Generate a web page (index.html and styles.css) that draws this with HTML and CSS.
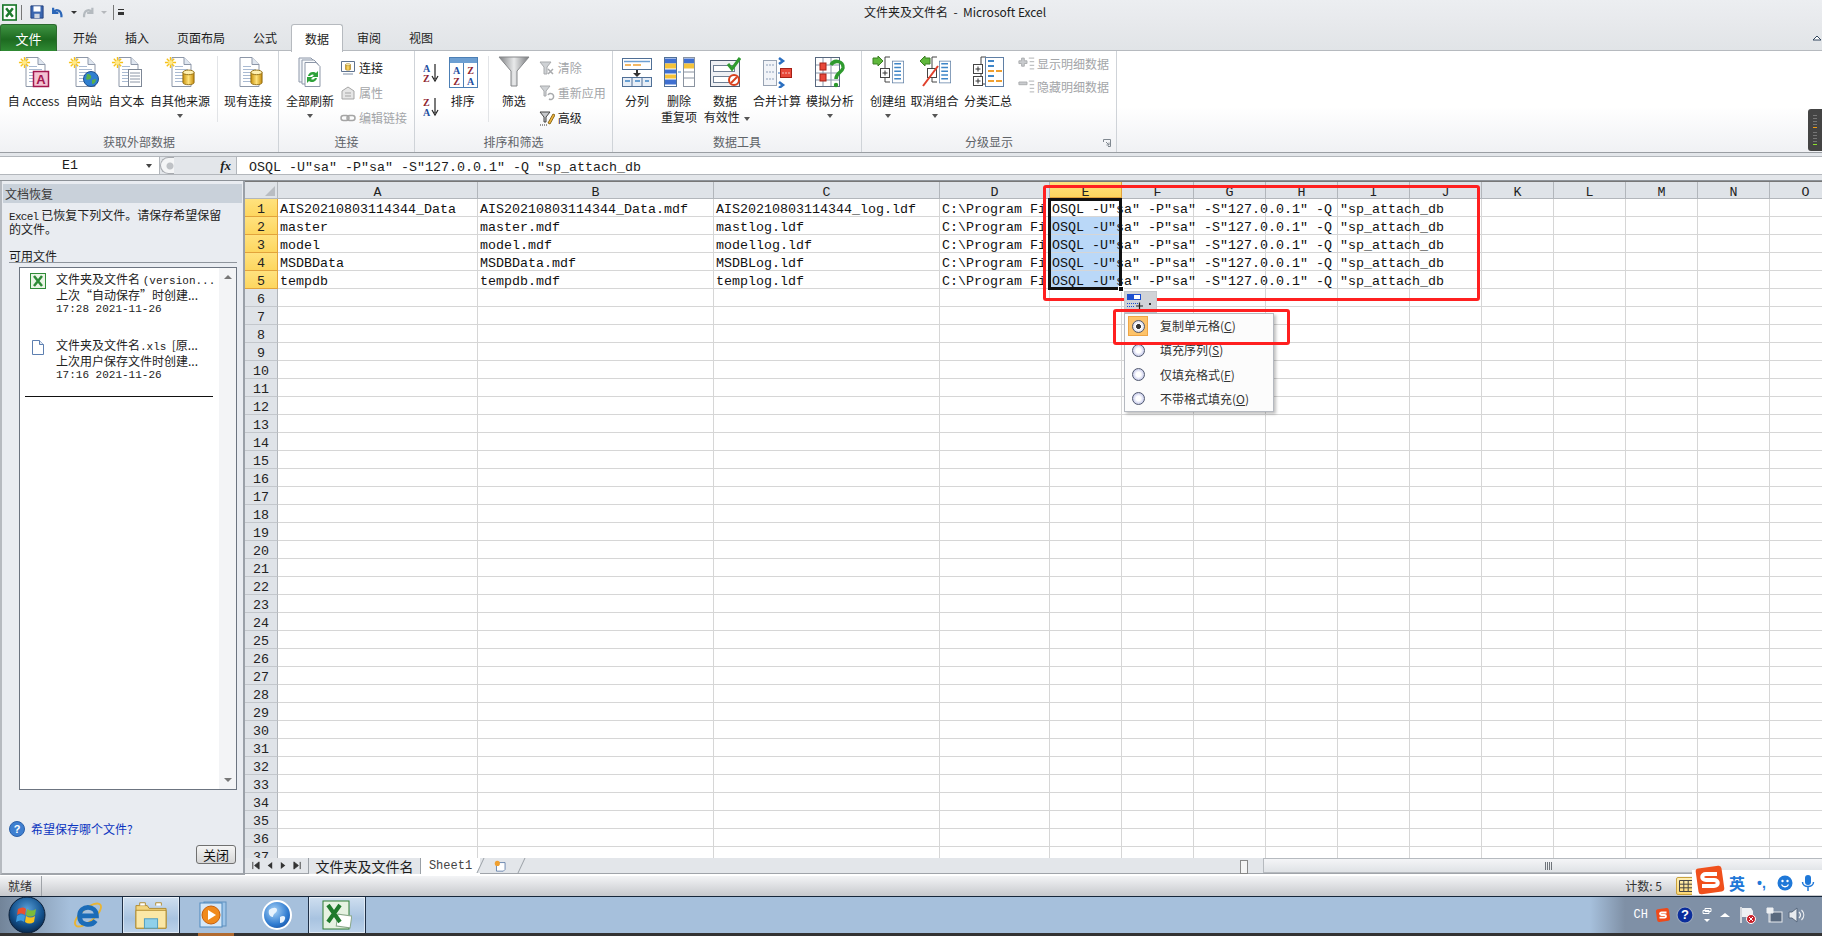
FILE: index.html
```html
<!DOCTYPE html>
<html lang="zh-CN">
<head>
<meta charset="utf-8">
<title>文件夹及文件名 - Microsoft Excel</title>
<link rel="stylesheet" href="styles.css">
</head>
<body>
<svg class="defs" width="0" height="0">
  <defs>
    <linearGradient id="gold" x1="0" x2="1" y1="0" y2="0"><stop offset="0" stop-color="#c9920e"/><stop offset=".5" stop-color="#ffe27a"/><stop offset="1" stop-color="#c48a0a"/></linearGradient>
    <linearGradient id="steel" x1="0" x2="1" y1="0" y2="0"><stop offset="0" stop-color="#7d7f82"/><stop offset=".5" stop-color="#e9eaeb"/><stop offset="1" stop-color="#77797c"/></linearGradient>
    <radialGradient id="orb" cx=".5" cy=".35" r=".7"><stop offset="0" stop-color="#5aa0d8"/><stop offset=".6" stop-color="#14538f"/><stop offset="1" stop-color="#071f3e"/></radialGradient>
    <radialGradient id="globe" cx=".4" cy=".35" r=".7"><stop offset="0" stop-color="#a9d3f7"/><stop offset=".7" stop-color="#2f7bd0"/><stop offset="1" stop-color="#1a56a8"/></radialGradient>
    <symbol id="doc" viewBox="0 0 32 32"><path d="M8 1.500h12l7 7v22H8z" fill="#fff" stroke="#8d97a8"/><path d="M20 1.500v7h7" fill="#dfe6f0" stroke="#8d97a8"/><path d="M11 10.500h8M11 13.500h13M11 16.500h13M11 19.500h13M11 22.500h13M11 25.500h13" stroke="#a9bad2"/></symbol>
    <symbol id="star" viewBox="0 0 14 14"><path d="M7 1v12M1 7h12M3 3l8 8M11 3l-8 8" stroke="#f6c21a" stroke-width="1.500"/><circle cx="7" cy="7" r="2.500" fill="#ffe98a"/></symbol>
    <symbol id="cyl" viewBox="0 0 14 18"><path d="M1 3.500v11c0 3 12 3 12 0v-11z" fill="url(#gold)" stroke="#8f6a10"/><ellipse cx="7" cy="3.500" rx="6" ry="2.500" fill="#fff0b0" stroke="#8f6a10"/></symbol>
    <symbol id="grouplist" viewBox="0 0 16 30"><rect x=".5" y=".5" width="15" height="29" fill="#fff" stroke="#5f7fa5"/><path d="M3 4h9M3 9h9M3 14h9M3 19h9M3 24h9" stroke="#3f86c8" stroke-width="2"/></symbol>
  </defs>
</svg>

<div class="app">
  <header class="titlebar">
    <div class="qat">
      <svg class="qat-x" viewBox="0 0 18 20"><rect x="1" y="1" width="16" height="18" fill="#fff" stroke="#1e7a2e" stroke-width="2"/><path d="M5 5l8 10M13 5l-8 10" stroke="#1e7a2e" stroke-width="3"/></svg>
      <span class="qat-sep"></span>
      <svg class="qat-i" viewBox="0 0 16 16"><path d="M1 1h14v14H1z" fill="#3a66b0" stroke="#1f3c78"/><rect x="4" y="1.500" width="8" height="6" fill="#fff"/><rect x="5" y="10" width="6" height="5" fill="#cfd6e2"/></svg>
      <svg class="qat-i undo" viewBox="0 0 16 16"><path d="M3 3v6h6M3.500 8.500C6 4 13 5 12.500 14" fill="none" stroke="#2b66b8" stroke-width="2.500"/></svg>
      <span class="qat-drop"></span>
      <svg class="qat-i redo" viewBox="0 0 16 16"><path d="M13 3v6H7M12.500 8.500C10 4 3 5 3.500 14" fill="none" stroke="#b4babf" stroke-width="2.500"/></svg>
      <span class="qat-drop dim"></span>
      <span class="qat-sep second"></span>
      <span class="qat-more"></span>
    </div>
    <div class="doc-title">文件夹及文件名 &nbsp;-&nbsp; Microsoft Excel</div>
  </header>

  <nav class="tabs">
    <div class="tab-file">文件</div>
    <div class="tab">开始</div>
    <div class="tab">插入</div>
    <div class="tab">页面布局</div>
    <div class="tab">公式</div>
    <div class="tab active">数据</div>
    <div class="tab">审阅</div>
    <div class="tab">视图</div>
    <svg class="collapse" viewBox="0 0 10 7"><path d="M1 6l4-4 4 4z" fill="#fff" stroke="#33475e"/></svg>
  </nav>

  <section class="ribbon">
    <div class="group g1">
      <div class="group-body">
        <div class="big w55"><svg class="ico" viewBox="0 0 32 32"><use href="#doc"/><use href="#star" x="0" y="0" width="13" height="13"/><rect x="15.500" y="15.500" width="15" height="15" fill="#f3c2d2" stroke="#a2164e" stroke-width="1.500"/><text x="23" y="28" class="ico-a">A</text></svg><span>自 Access</span></div>
        <div class="big w46"><svg class="ico" viewBox="0 0 32 32"><use href="#doc"/><use href="#star" x="0" y="0" width="13" height="13"/><circle cx="23" cy="23" r="7.500" fill="#2f7fd0" stroke="#1c4f8f"/><path d="M19 18c3 0 5 2 4 4s-4 2-5 1zM24 24l4-1c0 3-2 5-4 5z" fill="#57b04b"/></svg><span>自网站</span></div>
        <div class="big w39"><svg class="ico" viewBox="0 0 32 32"><use href="#doc"/><use href="#star" x="0" y="0" width="13" height="13"/><rect x="17.500" y="13.500" width="13" height="17" fill="#fff" stroke="#7d8796"/><path d="M19 17h10M19 20h10M19 23h10M19 26h10" stroke="#8c96a6"/></svg><span>自文本</span></div>
        <div class="big w68"><svg class="ico" viewBox="0 0 32 32"><use href="#doc"/><use href="#star" x="0" y="0" width="13" height="13"/><use href="#cyl" x="18" y="13" width="13" height="17"/></svg><span>自其他来源</span><i class="caret"></i></div>
        <span class="vsep sep1"></span>
        <div class="big w56"><svg class="ico" viewBox="0 0 32 32"><use href="#doc"/><use href="#cyl" x="18" y="13" width="13" height="17"/></svg><span>现有连接</span></div>
      </div>
      <div class="group-label">获取外部数据</div>
    </div>

    <div class="group g2">
      <div class="group-body">
        <div class="big w60"><svg class="ico" viewBox="0 0 32 32"><path d="M5 2h12l4 4v20H5z" fill="#f2f5f9" stroke="#8d97a8"/><path d="M8 4h12l4 4v20H8z" fill="#f8fafc" stroke="#8d97a8"/><path d="M11 6.500h11l4 4v20H11z" fill="#fff" stroke="#8d97a8"/><path d="M14 20a5 5 0 0 1 8-3l2-2v6h-6l2-2a3 3 0 0 0-4 1zM23 22a5 5 0 0 1-8 3l-2 2v-6h6l-2 2a3 3 0 0 0 4-1z" fill="#2ea23a"/></svg><span>全部刷新</span><i class="caret"></i></div>
        <div class="small-col w62">
          <div class="small"><svg class="sm" viewBox="0 0 16 16"><path d="M1.500 1.500h13v10h-13z" fill="#fff" stroke="#5f7390"/><use href="#cyl" x="5" y="3" width="6" height="8"/><path d="M3 14h10" stroke="#7f8ea5"/></svg>连接</div>
          <div class="small off"><svg class="sm" viewBox="0 0 16 16"><path d="M2 6l6-4 6 4v8H2z" fill="#e6e6e6" stroke="#a5a5a5"/><path d="M5 8h6M5 11h6" stroke="#a5a5a5"/></svg>属性</div>
          <div class="small off"><svg class="sm" viewBox="0 0 16 16"><rect x="1" y="5.500" width="8" height="5" rx="2.500" fill="none" stroke="#a5a5a5" stroke-width="1.500"/><rect x="7" y="5.500" width="8" height="5" rx="2.500" fill="none" stroke="#a5a5a5" stroke-width="1.500"/></svg>编辑链接</div>
        </div>
      </div>
      <div class="group-label">连接</div>
    </div>

    <div class="group g3">
      <div class="group-body">
        <div class="sort-col">
          <svg class="sort-ico" viewBox="0 0 16 20"><text x="0" y="9" class="az blue">A</text><text x="0" y="19" class="az red">Z</text><path d="M12 1v15M9 13l3 5 3-5" fill="none" stroke="#222" stroke-width="1.200"/></svg>
          <svg class="sort-ico" viewBox="0 0 16 20"><text x="0" y="9" class="az red">Z</text><text x="0" y="19" class="az blue">A</text><path d="M12 1v15M9 13l3 5 3-5" fill="none" stroke="#222" stroke-width="1.200"/></svg>
        </div>
        <div class="big w30"><svg class="ico" viewBox="0 0 32 32"><rect x="2.500" y="1.500" width="28" height="30" fill="#fff" stroke="#4c7fb5"/><rect x="3" y="2" width="27" height="5" fill="#6d9fd2"/><path d="M16.500 7v24" stroke="#4c7fb5"/><text x="9.500" y="18" class="az2 blue">A</text><text x="23.500" y="18" class="az2 red">Z</text><text x="9.500" y="29" class="az2 red">Z</text><text x="23.500" y="29" class="az2 blue">A</text></svg><span>排序</span></div>
        <span class="vsep sep2"></span>
        <div class="big w50"><svg class="ico" viewBox="0 0 32 32"><path d="M1 1h30L19 15v15h-6V15z" fill="url(#steel)" stroke="#85878a"/></svg><span>筛选</span></div>
        <div class="small-col w74">
          <div class="small off"><svg class="sm" viewBox="0 0 16 16"><path d="M1 2h11L8 7v7H5V7z" fill="#cfd2d5" stroke="#a8aaad"/><path d="M9 9l5 5M14 9l-5 5" stroke="#a8aaad" stroke-width="1.500"/></svg>清除</div>
          <div class="small off"><svg class="sm" viewBox="0 0 16 16"><path d="M1 1h10L7 6v5H5V6z" fill="#cfd2d5" stroke="#a8aaad"/><path d="M9 10a3 3 0 1 1 1 4" fill="none" stroke="#a8aaad" stroke-width="1.500"/></svg>重新应用</div>
          <div class="small"><svg class="sm" viewBox="0 0 16 16"><path d="M1 2h10L7 7v5H5V7z" fill="#c7c9cc" stroke="#444"/><path d="M9 13L14 4l2 1-5 9z" fill="#f3b53c" stroke="#8a6a1c"/><path d="M1 15h7" stroke="#333" stroke-dasharray="1 1"/></svg>高级</div>
        </div>
      </div>
      <div class="group-label">排序和筛选</div>
    </div>

    <div class="group g4">
      <div class="group-body">
        <div class="big w36"><svg class="ico" viewBox="0 0 32 32"><rect x="1.500" y="2.500" width="29" height="11" fill="#fff" stroke="#4f6f96"/><path d="M3 5.500h26" stroke="#6d9fd2" stroke-width="1.500"/><path d="M4 9h6M12 9h8" stroke="#f0a030" stroke-width="1.500"/><path d="M16 14v4" stroke="#333" stroke-width="2"/><path d="M12 17l4 4 4-4z" fill="#333"/><rect x="1.500" y="21.500" width="29" height="9" fill="#e7eef7" stroke="#4f6f96"/><path d="M11 22v8M21 22v8" stroke="#4f6f96"/><path d="M4 25h5M14 25h5M24 25h4" stroke="#3f86c8" stroke-width="1.500"/></svg><span>分列</span></div>
        <div class="big w48"><svg class="ico" viewBox="0 0 32 32"><rect x="1.500" y="1.500" width="12" height="29" fill="#fff" stroke="#4f6f96"/><path d="M2 5h11" stroke="#3f6fd0" stroke-width="5"/><path d="M2 10h11" stroke="#f5c33a" stroke-width="5"/><path d="M2 15.500h11" stroke="#3f6fd0" stroke-width="4"/><path d="M2 20.500h11" stroke="#f5c33a" stroke-width="4"/><path d="M2 26h11" stroke="#3f6fd0" stroke-width="5"/><path d="M15 16h3" stroke="#3f86c8"/><rect x="20.500" y="1.500" width="11" height="29" fill="#fff" stroke="#8a93a0"/><path d="M21 5h10" stroke="#3f6fd0" stroke-width="5"/><path d="M21 10h10" stroke="#f5c33a" stroke-width="5"/><path d="M21 16h10M21 22h10" stroke="#8a93a0"/></svg><span>删除</span><span>重复项</span></div>
        <div class="big w44"><svg class="ico" viewBox="0 0 32 32"><rect x="1.500" y="4.500" width="29" height="26" fill="#eef0f4" stroke="#4d5c70"/><rect x="4.500" y="9.500" width="21" height="6" fill="#fff" stroke="#6f7f94"/><rect x="4.500" y="20.500" width="21" height="6" fill="#fff" stroke="#6f7f94"/><path d="M19 8l4 5 8-11" fill="none" stroke="#2e9a2e" stroke-width="3"/><circle cx="25" cy="24" r="5" fill="#fff" stroke="#d8401c" stroke-width="2"/><path d="M22 27l6-6" stroke="#d8401c" stroke-width="2"/></svg><span>数据</span><span class="lift2">有效性 <i class="caret inline"></i></span></div>
        <div class="big w60"><svg class="ico" viewBox="0 0 32 32"><rect x="2.500" y="4.500" width="13" height="25" fill="#f2f4f8" stroke="#98a3b3"/><path d="M5 9h8M5 16h8M5 23h8" stroke="#8ea0bb" stroke-dasharray="2 1"/><rect x="19.500" y="12.500" width="11" height="9" fill="#e8483a" stroke="#a52016"/><path d="M21 17h8" stroke="#f7c2bc" stroke-dasharray="2 1"/><path d="M17 17h2" stroke="#2b66b8"/><path d="M18 2l4 3-4 3M18 26l4 3-4 3" fill="none" stroke="#2b6fc0" stroke-width="2.500"/></svg><span>合并计算</span></div>
        <div class="big w46"><svg class="ico" viewBox="0 0 32 32"><rect x="1.500" y="1.500" width="24" height="29" fill="#fff" stroke="#57677e"/><path d="M9 2v28M17 2v28M2 9h23M2 17h23M2 24h23" stroke="#8b98aa"/><rect x="6" y="7" width="6" height="7" fill="#e8483a" stroke="#a52016"/><rect x="6" y="18" width="6" height="7" fill="#e8483a" stroke="#a52016"/><path d="M17 9c3-6 13-4 12 3-1 5-7 4-7 11" fill="none" stroke="#2e9a2e" stroke-width="3.500"/><circle cx="22" cy="29" r="2.200" fill="#2e9a2e"/></svg><span>模拟分析</span><i class="caret"></i></div>
      </div>
      <div class="group-label">数据工具</div>
    </div>

    <div class="group g5">
      <div class="group-body">
        <div class="big w50"><svg class="ico" viewBox="0 0 32 32"><path d="M1 2h5V0l5 5-5 5V8H1z" fill="#5fb83c" stroke="#3b7f22"/><path d="M18 1h-5v25h5" fill="none" stroke="#444"/><rect x="8.500" y="12.500" width="9" height="9" fill="#fff" stroke="#444"/><path d="M10.500 17h5M13 14.500v5" stroke="#333"/><use href="#grouplist" x="20" y="1" width="12" height="30"/></svg><span>创建组</span><i class="caret"></i></div>
        <div class="big w43"><svg class="ico" viewBox="0 0 32 32"><path d="M11 2H6V0L1 5l5 5V8h5z" fill="#5fb83c" stroke="#3b7f22"/><path d="M18 1h-5v25h5" fill="none" stroke="#444"/><rect x="8.500" y="12.500" width="9" height="9" fill="#fff" stroke="#444"/><path d="M4 30L19 10" stroke="#e0402c" stroke-width="2"/><use href="#grouplist" x="20" y="1" width="12" height="30"/></svg><span>取消组合</span><i class="caret"></i></div>
        <div class="big w64"><svg class="ico" viewBox="0 0 32 32"><path d="M14 1H9v27h5" fill="none" stroke="#444"/><rect x="1.500" y="8.500" width="9" height="9" fill="#fff" stroke="#444"/><path d="M3.500 13h5M6 10.500v5" stroke="#333"/><rect x="1.500" y="20.500" width="9" height="9" fill="#fff" stroke="#444"/><path d="M3.500 25h5M6 22.500v5" stroke="#333"/><rect x="13.500" y="1.500" width="18" height="29" fill="#fff" stroke="#5f7fa5"/><path d="M16 5h6M16 10h6M16 20h6" stroke="#3f86c8" stroke-width="2"/><path d="M16 15h6M24 15h6M16 25h6M24 25h6" stroke="#f0a030" stroke-width="2"/></svg><span>分类汇总</span></div>
        <div class="small-col detail">
          <div class="small off tall"><svg class="sm2" viewBox="0 0 20 16"><path d="M4 2h3v3h3v3H7v3H4V8H1V5h3z" fill="#c9cbce" stroke="#a8aaad"/><path d="M12 2h6M13 6h5M13 10h5M13 14h5" stroke="#a8aaad"/></svg>显示明细数据</div>
          <div class="small off tall"><svg class="sm2" viewBox="0 0 20 16"><path d="M1 3h9v3H1z" fill="#c9cbce" stroke="#a8aaad"/><path d="M12 2h6M13 6h5M13 10h5M13 14h5" stroke="#a8aaad"/></svg>隐藏明细数据</div>
        </div>
      </div>
      <div class="group-label">分级显示<svg class="launcher" viewBox="0 0 8 8"><path d="M.5 3V.5H7.500V7.500H5M3 3l3 3M6 3.500V6H3.500" fill="none" stroke="#808890"/></svg></div>
    </div>
    <div class="meter"><i></i><i></i><i></i><i></i><i class="orange"></i><i class="gap"></i><i></i><i></i><i></i><i></i><i class="green"></i></div>
  </section>

  <div class="formula">
    <div class="namebox"><span>E1</span><i class="name-arrow"></i></div>
    <div class="fx-zone"><span class="knob"></span><em class="fx">fx</em></div>
    <div class="formula-text">OSQL -U"sa" -P"sa" -S"127.0.0.1" -Q "sp_attach_db</div>
  </div>

  <main class="main">
    <aside class="panel">
      <div class="panel-title">文档恢复</div>
      <p class="panel-desc"><span class="mono-word">Excel</span> 已恢复下列文件。请保存希望保留<br>的文件。</p>
      <div class="panel-sub">可用文件</div>
      <div class="file-list">
        <div class="files">
          <div class="file">
            <svg class="file-ico" viewBox="0 0 16 16"><rect x=".5" y=".5" width="15" height="15" fill="#eaf5e6" stroke="#2e8b37"/><path d="M4 3l8 10M12 3L4 13" stroke="#2e8b37" stroke-width="2.500"/></svg>
            <div class="file-text"><div>文件夹及文件名 <span class="mono-inline">(version...</span></div><div>上次“自动保存”时创建...</div><div class="mono-small">17:28 2021-11-26</div></div>
          </div>
          <div class="file second">
            <svg class="file-ico" viewBox="0 0 16 16"><path d="M2.500 1.500h7l4 4v10h-11z" fill="#fff" stroke="#5d7fb0"/><path d="M9.500 1.500v4h4" fill="#dfe8f4" stroke="#5d7fb0"/></svg>
            <div class="file-text"><div>文件夹及文件名<span class="mono-inline">.xls</span>&nbsp; [原...</div><div>上次用户保存文件时创建...</div><div class="mono-small">17:16 2021-11-26</div></div>
          </div>
          <hr class="file-rule">
        </div>
        <div class="list-scroll"><i class="up"></i><i class="down"></i></div>
      </div>
      <div class="help">
        <svg class="help-ico" viewBox="0 0 16 16"><circle cx="8" cy="8" r="7.500" fill="#3e7fd0" stroke="#2a5fa8"/><text x="8" y="12" class="help-q">?</text></svg>
        <span>希望保存哪个文件?</span>
      </div>
      <div class="panel-foot"><button class="close-btn" type="button">关闭</button></div>
    </aside>

    <section class="sheet">
      <div class="grid-wrap">
        <div class="corner"><i></i></div>
        <div class="colheads">
          <div class="ch c-a">A</div><div class="ch c-b">B</div><div class="ch c-c">C</div><div class="ch c-d">D</div>
          <div class="ch c-n sel">E</div><div class="ch c-n">F</div><div class="ch c-n">G</div><div class="ch c-n">H</div><div class="ch c-n">I</div><div class="ch c-n">J</div><div class="ch c-n">K</div><div class="ch c-n">L</div><div class="ch c-n">M</div><div class="ch c-n">N</div><div class="ch c-n">O</div>
        </div>
        <div class="rowheads">
          <div class="rh sel">1</div><div class="rh sel">2</div><div class="rh sel">3</div><div class="rh sel">4</div><div class="rh sel">5</div>
          <div class="rh">6</div><div class="rh">7</div><div class="rh">8</div><div class="rh">9</div><div class="rh">10</div><div class="rh">11</div><div class="rh">12</div><div class="rh">13</div><div class="rh">14</div><div class="rh">15</div><div class="rh">16</div><div class="rh">17</div><div class="rh">18</div><div class="rh">19</div><div class="rh">20</div><div class="rh">21</div><div class="rh">22</div><div class="rh">23</div><div class="rh">24</div><div class="rh">25</div><div class="rh">26</div><div class="rh">27</div><div class="rh">28</div><div class="rh">29</div><div class="rh">30</div><div class="rh">31</div><div class="rh">32</div><div class="rh">33</div><div class="rh">34</div><div class="rh">35</div><div class="rh">36</div><div class="rh">37</div>
        </div>
        <div class="cells">
          <div class="row"><div class="cell">AIS20210803114344_Data</div><div class="cell">AIS20210803114344_Data.mdf</div><div class="cell">AIS20210803114344_log.ldf</div><div class="cell">C:\Program Fi</div><div class="cell">OSQL -U"sa" -P"sa" -S"127.0.0.1" -Q "sp_attach_db</div></div>
          <div class="row"><div class="cell">master</div><div class="cell">master.mdf</div><div class="cell">mastlog.ldf</div><div class="cell">C:\Program Fi</div><div class="cell fill">OSQL -U"sa" -P"sa" -S"127.0.0.1" -Q "sp_attach_db</div></div>
          <div class="row"><div class="cell">model</div><div class="cell">model.mdf</div><div class="cell">modellog.ldf</div><div class="cell">C:\Program Fi</div><div class="cell fill">OSQL -U"sa" -P"sa" -S"127.0.0.1" -Q "sp_attach_db</div></div>
          <div class="row"><div class="cell">MSDBData</div><div class="cell">MSDBData.mdf</div><div class="cell">MSDBLog.ldf</div><div class="cell">C:\Program Fi</div><div class="cell fill">OSQL -U"sa" -P"sa" -S"127.0.0.1" -Q "sp_attach_db</div></div>
          <div class="row"><div class="cell">tempdb</div><div class="cell">tempdb.mdf</div><div class="cell">templog.ldf</div><div class="cell">C:\Program Fi</div><div class="cell fill">OSQL -U"sa" -P"sa" -S"127.0.0.1" -Q "sp_attach_db</div></div>
          <div class="selection"><i></i></div>
        </div>
      </div>
      <div class="sheet-foot">
        <div class="nav-btns">
          <svg viewBox="0 0 10 10"><path d="M2 1v8M9 1v8L4 5z" fill="#333" stroke="#333"/></svg>
          <svg viewBox="0 0 10 10"><path d="M8 1v8L3 5z" fill="#333"/></svg>
          <svg viewBox="0 0 10 10"><path d="M2 1v8l5-4z" fill="#333"/></svg>
          <svg viewBox="0 0 10 10"><path d="M8 1v8M1 1v8l5-4z" fill="#333" stroke="#333"/></svg>
        </div>
        <div class="sheet-tab">文件夹及文件名</div>
        <div class="sheet-tab current">Sheet1</div>
        <div class="sheet-new"><svg viewBox="0 0 16 14"><path d="M3 3h10v8l-2 2H3z" fill="#fff" stroke="#5c7ba6"/><circle cx="4" cy="4" r="3" fill="#f0a030"/></svg></div>
        <div class="hsplit"></div>
        <div class="hscroll"><span class="grip"></span></div>
      </div>
    </section>
  </main>

  <footer class="status">
    <div class="ready">就绪</div>
    <div class="count">计数: 5</div>
    <div class="view-btn"><svg viewBox="0 0 14 12"><path d="M.5.5h13v11H.5zM.5 4.200h13M.5 7.800h13M4.800.5v11M9.200.5v11" fill="none" stroke="#444"/></svg></div>
  </footer>

  <div class="taskbar">
    <div class="tb orb-slot"><svg class="orb" viewBox="0 0 38 38"><circle cx="19" cy="19" r="18" fill="url(#orb)" stroke="#0d2038"/><path d="M10 13c3-2 6-2 8 0l-1 6c-3-2-5-2-8 0z" fill="#e8512f"/><path d="M19 13c3 2 6 2 9 0l-1 6c-3 2-6 2-9 0z" fill="#7cbb3a"/><path d="M9 20c3-2 5-2 8 0l-1 6c-2-2-5-2-8 0z" fill="#3e9be0"/><path d="M18 20c3 2 6 2 9 0l-1 6c-3 2-6 2-9 0z" fill="#f6c21c"/></svg></div>
    <div class="tb ie-slot"><svg class="ie" viewBox="0 0 34 34"><ellipse cx="17" cy="17" rx="17" ry="7" transform="rotate(-40 17 17)" fill="none" stroke="#e9b434" stroke-width="2"/><path d="M8 18h18c0-12-18-12-18 0 0 11 13 11 17 5" fill="none" stroke="#1b6cb8" stroke-width="5"/></svg></div>
    <div class="tb active-tb w58"><svg class="folder" viewBox="0 0 34 30"><path d="M1 5h12l2 3h18v21H1z" fill="#f3d57e" stroke="#b08a2c"/><path d="M1 10h32v19H1z" fill="#fbe7a6" stroke="#b08a2c"/><rect x="10" y="19" width="14" height="10" fill="#8fd0ea" stroke="#4d9bc0"/><path d="M5 5V2h6v3M22 5V2h6v3" fill="#fff" stroke="#b08a2c"/></svg></div>
    <div class="tb w65"><svg class="media" viewBox="0 0 30 30"><rect x="6" y="2" width="22" height="24" fill="#9fc5e8" stroke="#5f8fbd"/><rect x="2" y="3" width="22" height="24" fill="#d5e7f7" stroke="#4d88bd"/><circle cx="13" cy="15" r="9" fill="#f08a1c" stroke="#c75f0c"/><path d="M10 10l8 5-8 5z" fill="#fff"/></svg></div>
    <div class="tb w63"><svg class="globe-i" viewBox="0 0 30 30"><circle cx="15" cy="15" r="14" fill="url(#globe)" stroke="#fff" stroke-width="2"/><path d="M7 10c4-3 8-3 8 0s-4 3-4 7c-3 0-5-3-4-7zM18 17c3-2 6-1 5 2s-3 4-5 4z" fill="#e8f3fd"/></svg></div>
    <div class="tb active-tb w58"><svg class="xl" viewBox="0 0 30 30"><rect x="1" y="1" width="26" height="28" fill="#e6f2e2" stroke="#2e7d32"/><rect x="15" y="15" width="14" height="12" fill="#fff" stroke="#8aa88a" transform="rotate(8 22 21)"/><path d="M6 5l12 17M18 5L6 22" stroke="#1f7a2c" stroke-width="4"/></svg></div>
    <div class="tray">
      <span class="ch-label">CH</span>
      <svg class="tray-s" viewBox="0 0 16 16"><rect x="1.500" y="1.500" width="13" height="13" rx="2" fill="#ef4a1a" transform="rotate(-8 8 8)"/><path d="M11.500 5.500H6.500c-2 0-2 2.500 0 2.500h3c2 0 2 2.700 0 2.700H4.500" fill="none" stroke="#fff" stroke-width="1.800"/></svg>
      <svg class="tray-q" viewBox="0 0 18 18"><circle cx="9" cy="9" r="8" fill="#0b2d9c" stroke="#9aa7b8" stroke-width="1.200"/><text x="9" y="13" class="tray-qt">?</text></svg>
      <svg class="tray-w" viewBox="0 0 10 18"><path d="M3 2.500h6v3H3zM1 4.500h6v3H1z" fill="none" stroke="#fff"/><path d="M2 13h6l-3 3z" fill="#fff"/></svg>
      <svg class="tray-u" viewBox="0 0 10 6"><path d="M0 5l5-4 5 4z" fill="#fff"/></svg>
      <svg class="tray-f flag" viewBox="0 0 18 18"><path d="M2 1v16" stroke="#eee" stroke-width="1.500"/><path d="M3 2h9l2 3v6H3z" fill="#eef0f3"/><circle cx="12" cy="13" r="4.500" fill="#c8202a" stroke="#fff"/><path d="M10 11l4 4M14 11l-4 4" stroke="#fff"/></svg>
      <svg class="tray-f" viewBox="0 0 18 18"><rect x="4" y="6" width="13" height="10" fill="#59697e" stroke="#e7eaee"/><path d="M2 2h6v5H2zM5 7v9" fill="#eef0f3" stroke="#eef0f3"/></svg>
      <svg class="tray-f" viewBox="0 0 18 18"><path d="M1 6h3l5-4v14l-5-4H1z" fill="#e8ebef" stroke="#59697e"/><path d="M11 6c2 2 2 4 0 6M13.500 4c3 3 3 7 0 10" fill="none" stroke="#eef0f3" stroke-width="1.200"/></svg>
    </div>
  </div>
  <div class="strip"><i></i></div>

  <div class="red-box box-a"></div>
  <div class="autofill">
    <svg viewBox="0 0 20 18"><rect x=".5" y=".5" width="13" height="5" fill="#fff" stroke="#1c4fd0"/><rect x="1" y="1" width="6" height="4" fill="#1c4fd0"/><path d="M0 9.500h13M0 12.500h7" stroke="#1c4fd0" stroke-dasharray="1 1"/><path d="M9 12h7M12.500 8.500v7" stroke="#222" stroke-width="1.200"/></svg>
    <i class="dot"></i>
  </div>
  <div class="fill-menu">
    <div class="mi current"><span class="radio-box"><i class="radio on"></i></span><span>复制单元格(<u>C</u>)</span></div>
    <div class="mi"><span class="radio-box"><i class="radio"></i></span><span>填充序列(<u>S</u>)</span></div>
    <div class="mi"><span class="radio-box"><i class="radio"></i></span><span>仅填充格式(<u>F</u>)</span></div>
    <div class="mi"><span class="radio-box"><i class="radio"></i></span><span>不带格式填充(<u>O</u>)</span></div>
  </div>
  <div class="red-box box-b"></div>

  <div class="ime">
    <svg class="ime-s" viewBox="0 0 30 30"><rect x="2" y="2" width="26" height="26" rx="3" fill="#f0501c" transform="rotate(-8 15 15)"/><path d="M22 9H11C6 9 6 15 11 15h8c5 0 5 6 0 6H7" fill="none" stroke="#fff" stroke-width="4"/></svg>
    <span class="ime-en">英</span>
    <span class="ime-p">•,</span>
    <svg class="ime-i" viewBox="0 0 16 16"><circle cx="8" cy="8" r="7.500" fill="#1f78d8"/><circle cx="5.500" cy="6" r="1.200" fill="#fff"/><circle cx="10.500" cy="6" r="1.200" fill="#fff"/><path d="M4.500 9.500c1.500 3 5.500 3 7 0" fill="none" stroke="#fff" stroke-width="1.300"/></svg>
    <svg class="ime-i" viewBox="0 0 16 16"><rect x="5" y="0" width="6" height="10" rx="3" fill="#1f78d8"/><path d="M2.500 7c0 6 11 6 11 0M8 12v4" fill="none" stroke="#1f78d8" stroke-width="1.500"/></svg>
  </div>
</div>
</body>
</html>
```
FILE: styles.css
```css
* { box-sizing: border-box; }
html, body { margin: 0; height: 100%; overflow: hidden; background: #fff; }
body { font: 12px/16px "Noto Sans CJK SC", "Liberation Sans", sans-serif; color: #1c1c1c; }
.defs { position: absolute; }
svg { display: block; flex: none; }
i { display: block; }

.app { position: relative; width: 1822px; height: 936px; display: flex; flex-direction: column; overflow: hidden; }

/* Title bar */
.titlebar { height: 24px; display: flex; align-items: center; background: linear-gradient(#eceef1, #e7e9ec); }
.qat { width: 864px; display: flex; align-items: center; padding-left: 2px; flex: none; }
.qat-x { width: 15px; height: 17px; }
.qat-sep { width: 1px; height: 15px; background: #777; margin: 0 6px 0 4px; }
.qat-sep.second { margin: 0 4px 0 6px; }
.qat-i { width: 14px; height: 14px; margin-left: 2px; }
.undo { margin-left: 6px; width: 15px; }
.redo { margin-left: 4px; }
.qat-drop { width: 0; height: 0; border: 3px solid transparent; border-top: 3px solid #333; border-bottom: 0; margin-left: 6px; }
.qat-drop.dim { border-top-color: #b5b8bc; }
.qat-more { width: 6px; height: 6px; border-top: 1px solid #333; border-bottom: 3px solid #333; }
.doc-title { font-size: 12px; white-space: nowrap; }

/* Tabs */
.tabs { height: 27px; display: flex; position: relative; background: linear-gradient(#e7e9ec, #e1e4e7); border-bottom: 1px solid #b6babf; }
.tab-file { width: 57px; margin-right: 2px; height: 27px; color: #fff; font-size: 13px; line-height: 28px; text-align: center; background: linear-gradient(#3f9443, #1d6a20 55%, #2f8a33); border: 1px solid #2b6a2e; border-radius: 3px 3px 0 0; border-bottom: 0; }
.tab { padding: 0 14px; line-height: 28px; height: 27px; font-size: 12px; }
.tab.active { background: #fff; border: 1px solid #b6babf; border-bottom: 0; border-radius: 3px 3px 0 0; padding: 0 13px; line-height: 27px; height: 28px; z-index: 1; }
.collapse { position: absolute; right: 0; top: 10px; width: 10px; height: 7px; }

/* Ribbon */
.ribbon { height: 102px; display: flex; position: relative; background: linear-gradient(#fff 55%, #f0f1f4); border-bottom: 1px solid #9a9ea3; }
.group { display: flex; flex-direction: column; border-right: 1px solid #cfd3d8; flex: none; }
.g1 { width: 279px; } .g2 { width: 136px; } .g3 { width: 198px; } .g4 { width: 249px; } .g5 { width: 255px; }
.group-body { height: 83px; display: flex; padding-left: 6px; }
.g2 .group-body { padding-left: 1px; }
.g3 .group-body { padding-left: 8px; }
.g5 .group-body { padding-left: 1px; }
.group-label { height: 17px; text-align: center; color: #5f6368; position: relative; line-height: 16px; }
.launcher { position: absolute; right: 5px; top: 5px; width: 8px; height: 8px; }
.big { display: flex; flex-direction: column; align-items: center; padding-top: 5px; flex: none; white-space: nowrap; line-height: 16px; }
.big .ico { width: 32px; height: 32px; margin-bottom: 5px; }
.big .caret { margin-top: 5px; }
.caret { width: 0; height: 0; border: 3px solid transparent; border-top: 4px solid #555; border-bottom: 0; }
.caret.inline { display: inline-block; vertical-align: middle; margin: 0 0 0 2px; }
.w30 { width: 30px; } .w36 { width: 36px; } .w39 { width: 39px; } .w43 { width: 43px; } .w44 { width: 44px; } .w46 { width: 46px; } .w48 { width: 48px; } .w50 { width: 50px; } .w55 { width: 55px; } .w56 { width: 56px; } .w60 { width: 60px; } .w64 { width: 64px; } .w68 { width: 68px; }
.vsep { width: 1px; height: 66px; margin: 5px 2px 0 3px; background: #e2e4e7; flex: none; }
.sep2 { margin: 5px 0 0 10px; }
.small-col { display: flex; flex-direction: column; padding-top: 4px; }
.w62 { width: 74px; }
.w74 { width: 74px; }
.small { height: 25px; display: flex; align-items: center; gap: 3px; white-space: nowrap; }
.small.off { color: #a3a5a8; }
.sm { width: 16px; height: 16px; }
.sm2 { width: 18px; height: 15px; }
.detail { margin-left: -2px; padding-top: 1px; }
.detail .small { gap: 1px; height: 23px; }
.sort-col { width: 25px; padding-top: 12px; display: flex; flex-direction: column; gap: 14px; }
.sort-ico { width: 16px; height: 20px; }
.az { font: bold 10px "Liberation Serif", serif; }
.az2 { font: bold 10px "Liberation Serif", serif; text-anchor: middle; }
.blue { fill: #1f4f9f; } .red { fill: #8f1f2f; }
.ico-a { font: bold 13px "Liberation Sans", sans-serif; fill: #a2164e; text-anchor: middle; }
.lift2 { padding-left: 4px; white-space: nowrap; }
.meter { position: absolute; right: 0; top: 58px; width: 14px; height: 42px; background: #444; border-radius: 3px 0 0 3px; padding: 6px 0 0 5px; }
.meter i { width: 4px; height: 1px; background: #777; margin-bottom: 2px; }
.meter .orange { background: #f39c12; }
.meter .green { background: #8be02c; }
.meter .gap { background: transparent; margin-bottom: 1px; }

/* Formula bar */
.formula { height: 28px; padding: 3px 0 5px; display: flex; background: #e3e6ea; border-bottom: 1px solid #8d9298; }
.namebox { width: 160px; background: #fff; border: 1px solid #b3b7bc; border-left: 0; display: flex; align-items: center; position: relative; font: 13.33px/22px "Liberation Mono", monospace; padding-left: 62px; }
.name-arrow { position: absolute; right: 7px; top: 7px; width: 0; height: 0; border: 3.5px solid transparent; border-top: 4px solid #444; border-bottom: 0; }
.fx-zone { width: 76px; display: flex; align-items: center; background: #e3e6ea; border-top: 1px solid #b3b7bc; border-bottom: 1px solid #b3b7bc; position: relative; }
.knob { width: 14px; height: 17px; border-radius: 9px 0 0 9px; border: 1px solid #a8abb0; border-right: 0; background: radial-gradient(circle at 9px 8px, #bfc2c6 3px, #f4f5f6 4px); }
.fx { position: absolute; right: 5px; font: italic bold 13px "Liberation Serif", serif; }
.formula-text { flex: 1; background: #fff; border: 1px solid #b3b7bc; border-right: 0; padding-left: 12px; font: 13.33px/21px "Liberation Mono", monospace; white-space: pre; }

/* Main */
.main { height: 694px; display: flex; flex: none; background: #e9ecf1; }
.panel { width: 245px; flex: none; display: flex; flex-direction: column; background: #e9ecf1; border-left: 2px solid #b6bac0; border-right: 2px solid #9aa0a8; border-bottom: 2px solid #a0a4aa; padding: 3px 1px 0 1px; }
.panel-title { height: 19px; flex: none; background: #c9d1da; padding-left: 2px; line-height: 19px; color: #3a3a3a; }
.panel-desc { margin: 6px 0 0; padding: 0 0 0 6px; line-height: 12px; font-size: 12px; height: 28px; flex: none; color: #222; white-space: nowrap; }
.mono-word { font: 11px/12px "Liberation Mono", monospace; letter-spacing: -.7px; }
.panel-sub { margin: 11px 5px 0 6px; height: 15px; flex: none; line-height: 15px; border-bottom: 1px solid #8e949c; }
.file-list { margin: 4px 5px 0 16px; height: 523px; flex: none; border: 1px solid #6c7480; background: #fff; display: flex; }
.files { flex: 1; padding-top: 4px; }
.file { display: flex; padding-left: 10px; height: 66px; }
.file.second { height: 58px; }
.file-ico { width: 16px; height: 16px; margin: 1px 10px 0 0; }
.file-text { line-height: 14px; white-space: nowrap; color: #222; }
.mono-small { font: 11px/14px "Liberation Mono", monospace; }
.mono-inline { font: 11px/14px "Liberation Mono", monospace; }
.file-rule { border: 0; border-top: 1px solid #111; margin: 0 6px 0 5px; }
.list-scroll { width: 17px; background: #f3f4f6; display: flex; flex-direction: column; justify-content: space-between; align-items: center; padding: 7px 0; }
.list-scroll .up { width: 0; height: 0; border: 4px solid transparent; border-bottom: 4px solid #777; border-top: 0; }
.list-scroll .down { width: 0; height: 0; border: 4px solid transparent; border-top: 4px solid #777; border-bottom: 0; }
.help { display: flex; align-items: center; gap: 6px; padding-left: 6px; margin-top: 31px; color: #0b35c0; flex: none; }
.help-ico { width: 16px; height: 16px; }
.help-q { font: bold 11px "Liberation Sans", sans-serif; fill: #fff; text-anchor: middle; }
.panel-foot { display: flex; justify-content: flex-end; padding: 8px 6px 0 0; flex: none; }
.close-btn { width: 40px; height: 19px; padding: 0; border: 1px solid #707070; border-radius: 3px; background: linear-gradient(#f5f5f5, #d6d6d6); font: 13px/16px "Noto Sans CJK SC", sans-serif; color: #111; }

/* Sheet */
.sheet { flex: 1; min-width: 0; display: flex; flex-direction: column; background: #fff; }
.grid-wrap { height: 677px; display: grid; grid-template-columns: 33px 1fr; grid-template-rows: 17px 1fr; overflow: hidden; border-top: 1px solid #777; }
.corner { background: #dfe3e8; border-right: 1px solid #b2b6bb; border-bottom: 1px solid #b2b6bb; position: relative; }
.corner i { position: absolute; right: 2px; bottom: 2px; border: 5px solid transparent; border-right: 5px solid #b9bdc2; border-bottom: 5px solid #b9bdc2; }
.colheads { display: flex; background: #dfe3e8; border-bottom: 1px solid #b2b6bb; overflow: hidden; }
.ch { flex: none; text-align: center; border-right: 1px solid #b2b6bb; font: 13.33px/21px "Liberation Mono", monospace; color: #222; }
.ch.sel { background: linear-gradient(#ffe27e, #fdd65f); border-right-color: #e2a33b; border-bottom: 1px solid #e2a33b; }
.c-a { width: 200px; } .c-b { width: 236px; } .c-c { width: 226px; } .c-d { width: 110px; } .c-n { width: 72px; }
.rowheads { background: #dfe3e8; }
.rh { height: 18px; text-align: center; border-bottom: 1px solid #c3c7cc; border-right: 1px solid #b2b6bb; font: 13.33px/21px "Liberation Mono", monospace; color: #222; }
.rh.sel { background: linear-gradient(#ffe27e, #fdd65f); border-color: #e2a33b; }
.cells { position: relative; background-color: #fff;
  background-image: repeating-linear-gradient(to bottom, transparent 0 17px, #d6d6d6 17px 18px),
    repeating-linear-gradient(to right, transparent 0 71px, #d6d6d6 71px 72px);
  background-position: 0 0, 772px 0;
  background-size: auto, calc(100% - 772px) 100%;
  background-repeat: repeat, no-repeat; }
.cells::before { content: ""; position: absolute; inset: 0; pointer-events: none;
  background-image: linear-gradient(#d6d6d6, #d6d6d6), linear-gradient(#d6d6d6, #d6d6d6), linear-gradient(#d6d6d6, #d6d6d6), linear-gradient(#d6d6d6, #d6d6d6);
  background-size: 1px 100%; background-repeat: no-repeat; background-position: 199px 0, 435px 0, 661px 0, 771px 0; }
.row { display: grid; grid-template-columns: 200px 236px 226px 110px 72px; height: 18px; position: relative; }
.cell { padding-left: 2px; font: 13.33px/21px "Liberation Mono", monospace; white-space: pre; height: 17px; color: #111; }
.cell.fill { background: linear-gradient(#bad8f8, #bad8f8) no-repeat left 0 / 71px 17px; }
.selection { position: absolute; left: 770px; top: -1px; width: 74px; height: 92px; border: 3px solid #111; }
.selection i { position: absolute; right: -5px; bottom: -5px; width: 6px; height: 6px; background: #111; border: 1px solid #fff; }
.sheet-foot { height: 16px; display: flex; background: #e3e6ea; border-bottom: 1px solid #a0a4aa; }
.nav-btns { width: 63px; flex: none; display: flex; align-items: center; justify-content: space-around; padding: 0 4px; }
.nav-btns svg { width: 9px; height: 9px; }
.sheet-tab { flex: none; font-size: 14px; line-height: 16px; background: #e3e6ea; border: 1px solid #9aa0a6; border-top: 0; border-bottom: 0; white-space: nowrap; width: 113px; text-align: center; height: 16px; }
.sheet-tab.current { background: #fff; width: 59px; border: 0; font: 12px/16px "Liberation Mono", monospace; color: #444; }
.sheet-new { width: 42px; flex: none; display: flex; align-items: center; justify-content: center; transform: skewX(-25deg); background: #e3e6ea; border-right: 1px solid #9aa0a6; border-left: 1px solid #9aa0a6; }
.sheet-new svg { width: 14px; height: 12px; transform: skewX(25deg); }
.hsplit { width: 741px; flex: none; position: relative; }
.hsplit::after { content: ""; position: absolute; right: 15px; top: 2px; width: 6px; height: 12px; border: 1px solid #888; background: #f4f4f4; }
.hscroll { width: 570px; flex: none; background: linear-gradient(#f4f5f7, #dfe2e6); border: 1px solid #b6babf; display: flex; justify-content: center; align-items: center; }
.grip { width: 7px; height: 8px; background: repeating-linear-gradient(to right, #6f747a 0 1px, transparent 1px 2px); }

/* Status */
.status { height: 21px; display: flex; align-items: center; background: linear-gradient(#f3f4f6, #c7c9cd); border-top: 1px solid #fff; flex: none; }
.ready { width: 42px; height: 20px; padding-left: 8px; line-height: 20px; border-right: 1px solid #9fa3a8; color: #333; }
.count { margin-left: auto; color: #333; font-size: 12px; }
.view-btn { margin: 0 127px 0 14px; width: 19px; height: 18px; border: 1px solid #c9a13d; background: linear-gradient(#ffefb5, #fcd873); display: flex; align-items: center; justify-content: center; border-radius: 2px; }
.view-btn svg { width: 14px; height: 12px; }

/* Taskbar */
.taskbar { height: 37px; flex: none; display: flex; align-items: center; border-top: 1px solid #16263a; background: linear-gradient(to right, #728499 0, #a6c0dc 70px, #a6c0dc 1590px, #7f90a6 1625px, #7f90a6 100%); }
.tb { display: flex; align-items: center; justify-content: center; height: 36px; flex: none; }
.orb-slot { width: 54px; }
.ie-slot { width: 68px; }
.w58 { width: 58px; } .w65 { width: 65px; } .w63 { width: 63px; }
.active-tb { background: linear-gradient(#cfdff0, #a8c3e0 60%, #bcd2ea); border-left: 1px solid #1f3047; border-right: 1px solid #1f3047; box-shadow: inset 0 0 0 1px rgba(255,255,255,.5); }
.orb { width: 38px; height: 38px; }
.ie { width: 32px; height: 32px; }
.folder { width: 32px; height: 30px; }
.media { width: 30px; height: 30px; }
.globe-i { width: 30px; height: 30px; }
.xl { width: 30px; height: 30px; }
.tray { margin-left: auto; display: flex; align-items: center; height: 36px; padding-right: 16px; }
.ch-label { font: 12px "Liberation Mono", monospace; color: #fff; margin-right: 7px; }
.tray-s { width: 16px; height: 16px; margin-right: 5px; }
.tray-q { width: 18px; height: 18px; margin-right: 8px; }
.tray-qt { font: bold 13px "Liberation Sans", sans-serif; fill: #fff; text-anchor: middle; }
.tray-w { width: 10px; height: 18px; margin-right: 8px; }
.tray-u { width: 10px; height: 6px; margin-right: 9px; }
.tray-f { width: 18px; height: 18px; margin-right: 5px; }
.tray-f.flag { margin-right: 8px; }
.tray-f:last-child { margin-right: 0; }
.strip { height: 3px; background: #333; position: relative; flex: none; }
.strip i { position: absolute; left: 198px; width: 36px; height: 3px; background: #b06a30; }

/* Overlays */
.red-box { position: absolute; border: 3px solid #ff2020; border-radius: 3px; pointer-events: none; }
.box-a { left: 1043px; top: 185px; width: 437px; height: 116px; }
.box-b { left: 1113px; top: 309px; width: 177px; height: 36px; }
.autofill { position: absolute; left: 1124px; top: 291px; width: 33px; height: 22px; background: #d0d3d7; border: 1px solid #c4c7cb; padding: 2px 0 0 2px; }
.autofill svg { width: 20px; height: 18px; }
.autofill .dot { position: absolute; right: 5px; top: 11px; width: 2px; height: 2px; background: #333; }
.fill-menu { position: absolute; left: 1124px; top: 313px; width: 150px; height: 99px; background: #fcfcfc; border: 1px solid #b5b9c0; box-shadow: 2px 2px 3px rgba(0,0,0,.25); }
.mi { height: 24.250px; display: flex; align-items: center; color: #333; padding-left: 3px; }
.radio-box { width: 20px; height: 20px; display: flex; align-items: center; justify-content: center; margin-right: 12px; border: 1px solid transparent; }
.mi.current .radio-box { background: #fdc36a; border-color: #efa544; }
.radio { width: 13px; height: 13px; border-radius: 50%; background: radial-gradient(circle, #fff 30%, #c4c8ea 75%); border: 1px solid #50586e; }
.radio.on { background: radial-gradient(circle, #333 28%, #fff 35%, #d7d9e8 75%); }
.ime { position: absolute; left: 1692px; top: 870px; width: 130px; height: 25px; background: #fff; display: flex; align-items: center; }
.ime-s { position: absolute; left: 3px; top: -5px; width: 30px; height: 30px; }
.ime-en { margin-left: 37px; font: bold 16px/20px "Noto Sans CJK SC", sans-serif; color: #1f78d8; width: 16px; }
.ime-p { margin-left: 12px; width: 12px; font: bold 14px/18px "Liberation Sans", sans-serif; color: #1f78d8; }
.ime-i { width: 16px; height: 16px; margin-left: 8px; }
.ime-i + .ime-i { margin-left: 7px; }
```
